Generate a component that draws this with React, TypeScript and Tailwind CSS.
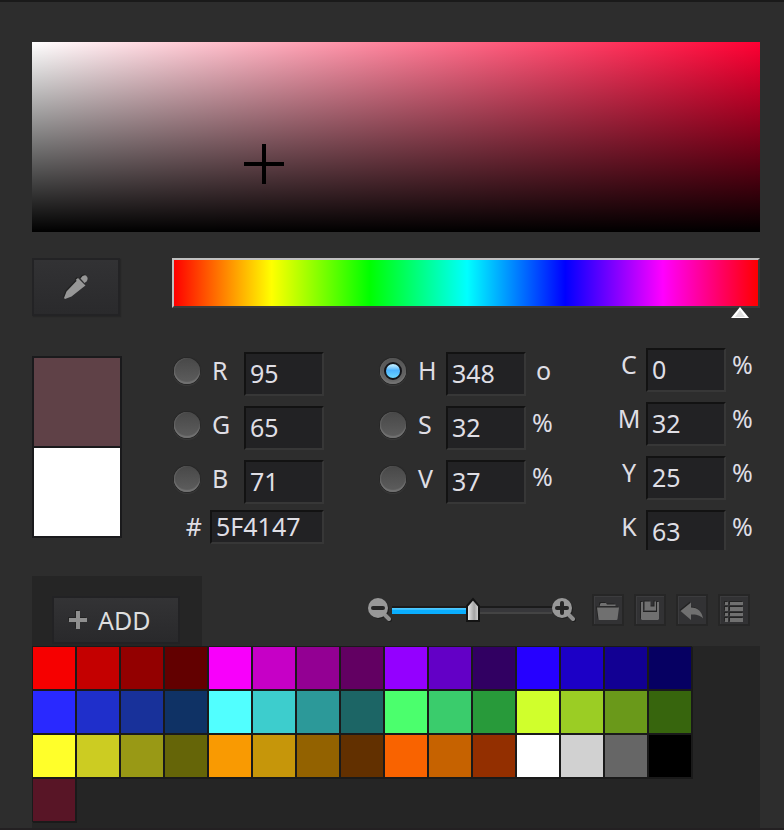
import { useState } from "react";
import type { ReactNode } from "react";

const swatches: [string, string][] = [
  ["F60000", "bg-[#f60000]"], ["C40000", "bg-[#c40000]"], ["930000", "bg-[#930000]"], ["620000", "bg-[#620000]"],
  ["F800FB", "bg-[#f800fb]"], ["C600C6", "bg-[#c600c6]"], ["930093", "bg-[#930093]"], ["620062", "bg-[#620062]"],
  ["9400FF", "bg-[#9400ff]"], ["6300C6", "bg-[#6300c6]"], ["310062", "bg-[#310062]"], ["2600FF", "bg-[#2600ff]"],
  ["1C00C6", "bg-[#1c00c6]"], ["120093", "bg-[#120093]"], ["060062", "bg-[#060062]"],
  ["2929FF", "bg-[#2929ff]"], ["1F2FCB", "bg-[#1f2fcb]"], ["18319A", "bg-[#18319a]"], ["0F3265", "bg-[#0f3265]"],
  ["51FFFF", "bg-[#51ffff]"], ["3DCDCD", "bg-[#3dcdcd]"], ["2C9999", "bg-[#2c9999]"], ["1C6565", "bg-[#1c6565]"],
  ["4BFF6D", "bg-[#4bff6d]"], ["3ACC6C", "bg-[#3acc6c]"], ["289A3A", "bg-[#289a3a]"], ["D0FF2C", "bg-[#d0ff2c]"],
  ["9BCD24", "bg-[#9bcd24]"], ["6A991A", "bg-[#6a991a]"], ["37650D", "bg-[#37650d]"],
  ["FFFF2A", "bg-[#ffff2a]"], ["CCCC22", "bg-[#cccc22]"], ["999915", "bg-[#999915]"], ["656508", "bg-[#656508]"],
  ["F99A02", "bg-[#f99a02]"], ["C6960A", "bg-[#c6960a]"], ["936200", "bg-[#936200]"], ["623000", "bg-[#623000]"],
  ["F96300", "bg-[#f96300]"], ["C66200", "bg-[#c66200]"], ["932F00", "bg-[#932f00]"], ["FFFFFF", "bg-white"],
  ["D1D1D1", "bg-[#d1d1d1]"], ["666666", "bg-[#666666]"], ["000000", "bg-black"],
  ["581526", "bg-[#581526]"],
];

const field =
  "border-2 border-t-[#121212] border-l-[#121212] border-r-[#373737] border-b-[#373737] bg-[#222224] px-1 text-[#dfdee4] outline-none";

function ChannelRadio({ name, checked }: { name: string; checked?: boolean }) {
  return (
    <span className="grid h-[38px] w-[30px] shrink-0 place-items-center">
      <input
        type="radio"
        name="channel"
        aria-label={name}
        defaultChecked={checked}
        className="peer col-start-1 row-start-1 size-[26px] appearance-none rounded-full bg-linear-to-b from-[#484848] to-[#5e5e5e] shadow-[0_0_0_1px_#272727,0_1px_1px_1px_#3a3a3a,inset_0_-2px_1px_#727272,inset_1px_0_1px_#626262] checked:from-[#555] checked:to-[#6a6a6a]"
      />
      <span className="pointer-events-none col-start-1 row-start-1 hidden size-[18px] rounded-full border-2 border-[#141418] bg-linear-to-b from-[#b4e8ff] from-10% via-[#4db4ff] via-45% to-[#6cd6ff] peer-checked:block" />
    </span>
  );
}

function RadioRow({ name, value, checked, wide, unit }: { name: string; value: string; checked?: boolean; wide?: boolean; unit?: string }) {
  return (
    <div className="flex items-start">
      <ChannelRadio name={name} checked={checked} />
      <label htmlFor={"f" + name} className={"shrink-0 pl-[10px] leading-9 " + (wide ? "w-[42px]" : "w-[38px]")}>
        {name}
      </label>
      <input id={"f" + name} defaultValue={value} className={"h-11 w-20 pb-[2px] " + field} />
      {unit && <span className={"leading-9 " + (unit === "%" ? "-mt-[2px] pl-[6px]" : "pl-[10px]")}>{unit}</span>}
    </div>
  );
}

function InkRow({ name, value, last }: { name: string; value: string; last?: boolean }) {
  return (
    <div className="flex items-start">
      <label htmlFor={"f" + name} className="mr-1 w-[26px] text-center leading-8">
        {name}
      </label>
      <input id={"f" + name} defaultValue={value} className={"w-20 " + field + (last ? " h-10 border-b-0" : " h-11 pb-[2px]")} />
      <span className="pl-[6px] leading-8">%</span>
    </div>
  );
}

function ToolButton({ label, children }: { label: string; children: ReactNode }) {
  return (
    <button aria-label={label} className="grid size-8 place-items-center border-2 border-[#262626] bg-[#323234] shadow-[inset_1px_1px_0_#3c3c3e]">
      <svg viewBox="0 0 24 24" className="size-6 fill-[#707070] drop-shadow-[-1px_-1px_0_#222]">
        {children}
      </svg>
    </button>
  );
}

function Magnifier({ plus }: { plus?: boolean }) {
  return (
    <svg viewBox="0 0 24 24" className="size-6 shrink-0 drop-shadow-[1px_1px_0_#1e1e1e]">
      <path d="M16 16l5 5" stroke="#8f8f8f" strokeWidth="4" strokeLinecap="round" />
      <circle cx="10" cy="10" r="10" fill="#989898" />
      <path d="M5 10h10" stroke="#262626" strokeWidth="4" strokeLinecap="round" />
      {plus && <path d="M10 5v10" stroke="#262626" strokeWidth="4" strokeLinecap="round" />}
    </svg>
  );
}

function SizeSlider() {
  const [value, setValue] = useState(51);
  return (
    <div className="relative h-6 w-40 pt-2">
      <div className="h-2 border-t-2 border-[#1b1b1b] bg-linear-to-b from-[#37373a] from-65% to-[#444] to-65%">
        <div className="h-[6px] bg-linear-to-b from-[#4cc9ff] from-20% to-[#0aaeff] to-35%" style={{ width: value + "%" }} />
      </div>
      <svg viewBox="0 0 14 26" className="absolute -top-[2px] h-[26px] w-[14px]" style={{ left: (value * 146) / 100 }}>
        <defs>
          <linearGradient id="thumb">
            <stop offset="0" stopColor="#f0f0f0" />
            <stop offset="0.6" stopColor="#a4a4a4" />
            <stop offset="1" stopColor="#d8d8d8" />
          </linearGradient>
        </defs>
        <path d="M1 10L7 3l6 7v15H1z" fill="url(#thumb)" stroke="#131313" strokeWidth="2" />
      </svg>
      <input
        type="range"
        aria-label="Swatch size"
        value={value}
        onChange={(e) => setValue(Number(e.target.value))}
        className="absolute inset-0 w-full opacity-0"
      />
    </div>
  );
}

export default function App() {
  return (
    <div className="flex min-h-screen flex-col border-t-2 border-b-2 border-t-[#1a1a1a] border-b-[#232022] bg-[#2d2d2d] pt-10 pr-6 pl-8 font-['Noto_Sans',sans-serif] text-[25px] text-[#dfdee4]">
      <div className="relative h-[190px] bg-[linear-gradient(to_right,#fff,#ff0033)]">
        <div className="h-full bg-[linear-gradient(to_bottom,transparent,#000)]" />
        <svg viewBox="0 0 40 40" className="absolute top-[102px] left-[212px] size-10">
          <path d="M20 0v40M0 20h40" stroke="#000" strokeWidth="4" />
        </svg>
      </div>

      <div className="mt-[26px] flex items-start gap-[52px]">
        <button aria-label="Pick a colour" className="grid h-[58px] w-[88px] shrink-0 place-items-center border-2 border-[#232325] bg-linear-to-b from-[#323234] to-[#2a2a2c] shadow-[1px_1px_1px_#262626]">
          <svg viewBox="0 0 24 24" className="size-6 fill-[#979797] drop-shadow-[-1px_-1px_0_#222]">
            <path d="M16.500 3.500Q19-.5 22 .5Q25 3 22.500 6.500L20.500 8z" />
            <path d="M14 3l7.500 7.500-2 1.500L7.500 21.500 1 24l-1-1 2.500-6.500L12.500 6 12 4.500z" />
          </svg>
        </button>
        <div className="relative h-[50px] flex-1 border-2 border-t-[#c0c0c0] border-r-[#3a3a3a] border-b-[#3a3a3a] border-l-[#c0c0c0] bg-[linear-gradient(to_right,#f00,#ff0_16.7%,#0f0_33.5%,#0ff_50.2%,#00f_67%,#f0f_83.7%,#f00)]">
          <svg viewBox="0 0 18 11" className="absolute -bottom-[12px] right-[9px] h-[11px] w-[18px]">
            <path d="M9 0l9 11H0z" fill="#fff" />
            <path d="M9 3l5 7H4z" fill="#dedede" />
          </svg>
        </div>
      </div>

      <div className="mt-8 flex items-start gap-[50px]">
        <div className="mt-2 flex w-[90px] shrink-0 flex-col gap-[2px] border-2 border-[#1a1a1c] bg-[#1a1a1c]">
          <div className="h-[88px] bg-[#5f4147]" />
          <div className="h-[88px] bg-white" />
        </div>
        <div className="flex flex-1 items-start justify-between">
          <div className="flex flex-col gap-[10px] pt-1">
            <RadioRow name="R" value="95" wide />
            <RadioRow name="G" value="65" wide />
            <RadioRow name="B" value="71" wide />
            <div className="-mt-1 flex">
              <label htmlFor="hex" className="w-[38px] pr-2 text-right leading-8">
                #
              </label>
              <input id="hex" defaultValue="5F4147" className={"h-[34px] w-[114px] " + field} />
            </div>
          </div>
          <div className="flex w-[184px] flex-col gap-[10px] pt-1">
            <RadioRow name="H" value="348" unit="o" checked />
            <RadioRow name="S" value="32" unit="%" />
            <RadioRow name="V" value="37" unit="%" />
          </div>
          <div className="flex w-36 flex-col gap-[10px]">
            <InkRow name="C" value="0" />
            <InkRow name="M" value="32" />
            <InkRow name="Y" value="25" />
            <InkRow name="K" value="63" last />
          </div>
        </div>
      </div>

      <div className="mt-[26px] flex items-start justify-between">
        <div className="w-[170px] bg-[#252525] px-5 pt-5 pb-[2px]">
          <button className="flex h-12 w-32 items-center gap-[10px] border-2 border-[#222224] bg-linear-to-b from-[#333335] to-[#29292b] pl-[14px] leading-8 text-[#dedede]">
            <svg viewBox="0 0 20 20" className="size-5 drop-shadow-[-1px_-1px_0_#222]">
              <path d="M10 1v18M1 10h18" stroke="#8f8f8f" strokeWidth="4" />
            </svg>
            ADD
          </button>
        </div>
        <div className="flex items-center pt-[18px] pr-[10px]">
          <Magnifier />
          <SizeSlider />
          <Magnifier plus />
          <div className="ml-4 flex gap-[10px]">
            <ToolButton label="Open">
              <path d="M4 8V6l1-1h5l1 1.500h8.500V8z" />
              <path d="M1 9.500h22L21.500 21q0 1-1 1h-17q-1 0-1-1z" />
            </ToolButton>
            <ToolButton label="Save">
              <path d="M3 4h2v10h14V4h2v17l-1 1H4l-1-1z" />
              <path d="M6.500 3.500h6v5h4v-5h1.500V12.500H6.500z" />
            </ToolButton>
            <ToolButton label="Undo">
              <path d="M0.500 13L11 4.500v5C18 9.500 22 14 23 20.500 20 17 16 16.500 11 16.500V22z" />
            </ToolButton>
            <ToolButton label="List">
              <path d="M3 4h3v3H3zM8 4h13v3H8zM3 9h3v4H3zM8 9h13v4H8zM3 15h3v3H3zM8 15h13v3H8zM3 20h3v4H3zM8 20h13v4H8z" />
            </ToolButton>
          </div>
        </div>
      </div>

      <div className="grid flex-1 grid-cols-[repeat(auto-fill,44px)] content-start bg-[#252525] pr-[68px] pb-[6px]">
        {swatches.map(([hex, bg]) => (
          <button key={hex} aria-label={"#" + hex} className={"size-11 border border-[#1a1a1a] shadow-[1px_1px_0_#1a1a1a] " + bg} />
        ))}
      </div>
    </div>
  );
}
